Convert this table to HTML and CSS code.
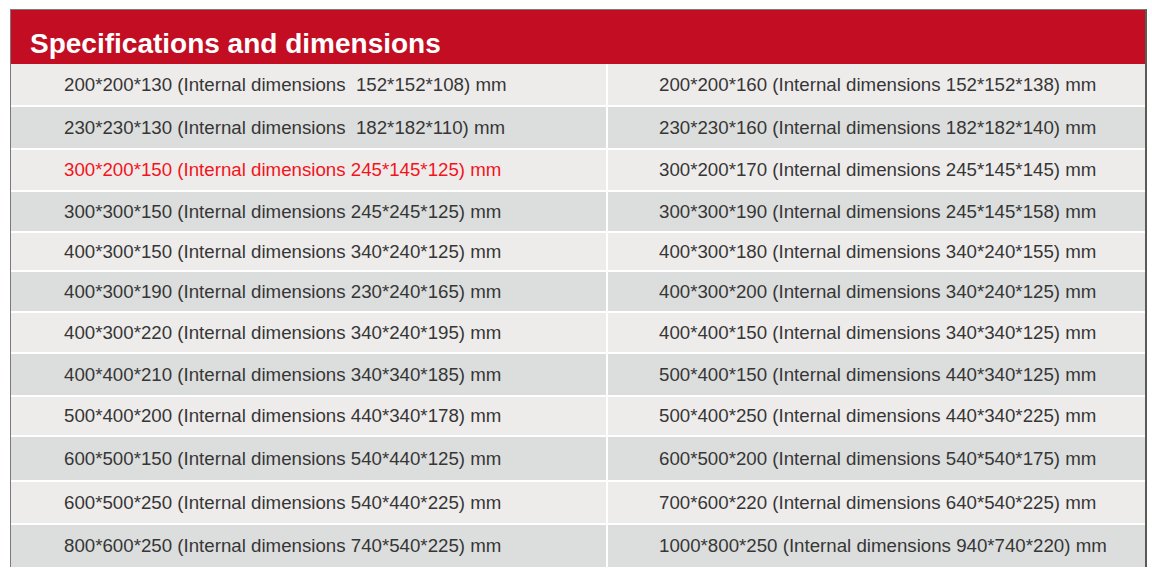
FILE: index.html
```html
<!DOCTYPE html>
<html lang="en">
<head>
<meta charset="utf-8">
<title>Specifications and dimensions</title>
<link rel="stylesheet" href="styles.css">
</head>
<body>
<section class="spec">
  <h1 class="spec-title">Specifications and dimensions</h1>
  <div class="spec-grid">
    <div class="cell light">200*200*130 (Internal dimensions&nbsp; 152*152*108) mm</div>
    <div class="cell light right">200*200*160 (Internal dimensions 152*152*138) mm</div>
    <div class="cell dark">230*230*130 (Internal dimensions&nbsp; 182*182*110) mm</div>
    <div class="cell dark right">230*230*160 (Internal dimensions 182*182*140) mm</div>
    <div class="cell light hot">300*200*150 (Internal dimensions 245*145*125) mm</div>
    <div class="cell light right">300*200*170 (Internal dimensions 245*145*145) mm</div>
    <div class="cell dark">300*300*150 (Internal dimensions 245*245*125) mm</div>
    <div class="cell dark right">300*300*190 (Internal dimensions 245*145*158) mm</div>
    <div class="cell light">400*300*150 (Internal dimensions 340*240*125) mm</div>
    <div class="cell light right">400*300*180 (Internal dimensions 340*240*155) mm</div>
    <div class="cell dark">400*300*190 (Internal dimensions 230*240*165) mm</div>
    <div class="cell dark right">400*300*200 (Internal dimensions 340*240*125) mm</div>
    <div class="cell light">400*300*220 (Internal dimensions 340*240*195) mm</div>
    <div class="cell light right">400*400*150 (Internal dimensions 340*340*125) mm</div>
    <div class="cell dark">400*400*210 (Internal dimensions 340*340*185) mm</div>
    <div class="cell dark right">500*400*150 (Internal dimensions 440*340*125) mm</div>
    <div class="cell light">500*400*200 (Internal dimensions 440*340*178) mm</div>
    <div class="cell light right">500*400*250 (Internal dimensions 440*340*225) mm</div>
    <div class="cell dark">600*500*150 (Internal dimensions 540*440*125) mm</div>
    <div class="cell dark right">600*500*200 (Internal dimensions 540*540*175) mm</div>
    <div class="cell light">600*500*250 (Internal dimensions 540*440*225) mm</div>
    <div class="cell light right">700*600*220 (Internal dimensions 640*540*225) mm</div>
    <div class="cell dark">800*600*250 (Internal dimensions 740*540*225) mm</div>
    <div class="cell dark right">1000*800*250 (Internal dimensions 940*740*220) mm</div>
  </div>
</section>
</body>
</html>
```
FILE: styles.css
```css
* { box-sizing: border-box; }

html, body {
  margin: 0;
  padding: 0;
  background: #ffffff;
}

body {
  padding: 9px 6px 0 10px;
  font-family: "Liberation Sans", Arial, sans-serif;
}

.spec {
  width: 1137px;
  border-top: 1px solid #7a7a7a;
  border-left: 1px solid #7a7a7a;
  border-right: 2px solid #5a5a5a;
}

.spec-title {
  margin: 0;
  height: 54px;
  padding: 19px 0 0 19px;
  background: #c20d23;
  color: #ffffff;
  font-size: 28px;
  line-height: 30px;
  font-weight: bold;
}

.spec-grid {
  display: grid;
  grid-template-columns: 595px 1fr;
  grid-template-rows: 41px 41px 40px 39px 37px 39px 39px 41px 38px 43px 41px 42px;
  gap: 2px;
  background: #ffffff;
}

.cell {
  display: flex;
  align-items: center;
  padding-left: 53px;
  font-size: 18.7px;
  color: #363636;
  white-space: nowrap;
}

.cell.right {
  padding-left: 51px;
}

.cell.light { background: #eeeceb; }
.cell.dark { background: #dcdedd; }
.cell.hot { color: #f2141c; }
```
